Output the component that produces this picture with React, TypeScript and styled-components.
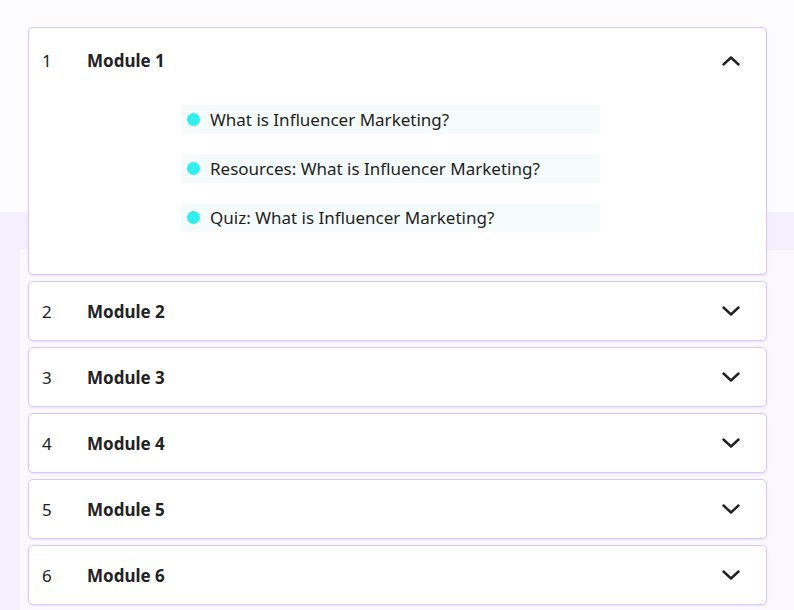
import React from 'react'
import styled, { createGlobalStyle } from 'styled-components'

const GlobalStyle = createGlobalStyle`
  html, body {
    margin: 0;
    padding: 0;
  }
  body {
    font-family: 'Noto Sans', 'Open Sans', sans-serif;
    color: #222;
  }
`

const Page = styled.div`
  width: 794px;
  height: 610px;
  overflow: hidden;
  box-sizing: border-box;
  padding: 27px 0 0 28px;
  background:
    linear-gradient(#faf8fe, #faf8fe) 20px 250px / 100% 100% no-repeat,
    linear-gradient(to bottom, #fcfbfe 212px, #f5f0fd 212px);
`

const List = styled.div`
  width: 739px;
  display: flex;
  flex-direction: column;
  gap: 6px;
`

const Card = styled.div<{ open?: boolean }>`
  background: #fff;
  border: 1px solid #dcc7fa;
  border-radius: 5px;
  box-shadow: 0 1px 2px rgba(205, 180, 250, 0.35);
  padding-bottom: ${(p) => (p.open ? '42px' : '0')};
`

const Header = styled.div<{ open?: boolean }>`
  height: ${(p) => (p.open ? '65px' : '58px')};
  display: flex;
  align-items: center;
  padding: 0 26px 0 13px;
`

const Num = styled.span`
  width: 45px;
  font-size: 17px;
  color: #222;
`

const Title = styled.span`
  flex: 1;
  font-size: 17px;
  font-weight: 700;
  color: #222;
`

const Chevron = styled.svg`
  width: 18px;
  height: 10px;
  display: block;
`

const Lessons = styled.ul`
  list-style: none;
  margin: 12px 0 0 152px;
  padding: 0;
  width: 419px;
  display: flex;
  flex-direction: column;
  gap: 20px;
`

const Lesson = styled.li`
  height: 29px;
  background: #f4fbfa;
  display: flex;
  align-items: center;
  gap: 10px;
  padding-left: 6px;
  font-size: 17px;
  color: #1f1f1f;
`

const Dot = styled.span`
  width: 13px;
  height: 13px;
  border-radius: 50%;
  background: #2ef0ec;
  flex-shrink: 0;
`

const modules = [1, 2, 3, 4, 5, 6]

const lessons = [
  'What is Influencer Marketing?',
  'Resources: What is Influencer Marketing?',
  'Quiz: What is Influencer Marketing?',
]

const Arrow = ({ up }: { up?: boolean }) => (
  <Chevron viewBox="0 0 18 10">
    <polyline
      points={up ? '1.5,8.5 9,1.5 16.5,8.5' : '1.5,1.5 9,8.5 16.5,1.5'}
      fill="none"
      stroke="#222"
      strokeWidth="2.4"
      strokeLinecap="round"
      strokeLinejoin="round"
    />
  </Chevron>
)

export default function App() {
  return (
    <>
      <GlobalStyle />
      <Page>
        <List>
          {modules.map((n) => {
            const open = n === 1
            return (
              <Card key={n} open={open}>
                <Header open={open}>
                  <Num>{n}</Num>
                  <Title>Module {n}</Title>
                  <Arrow up={open} />
                </Header>
                {open && (
                  <Lessons>
                    {lessons.map((l) => (
                      <Lesson key={l}>
                        <Dot />
                        {l}
                      </Lesson>
                    ))}
                  </Lessons>
                )}
              </Card>
            )
          })}
        </List>
      </Page>
    </>
  )
}
